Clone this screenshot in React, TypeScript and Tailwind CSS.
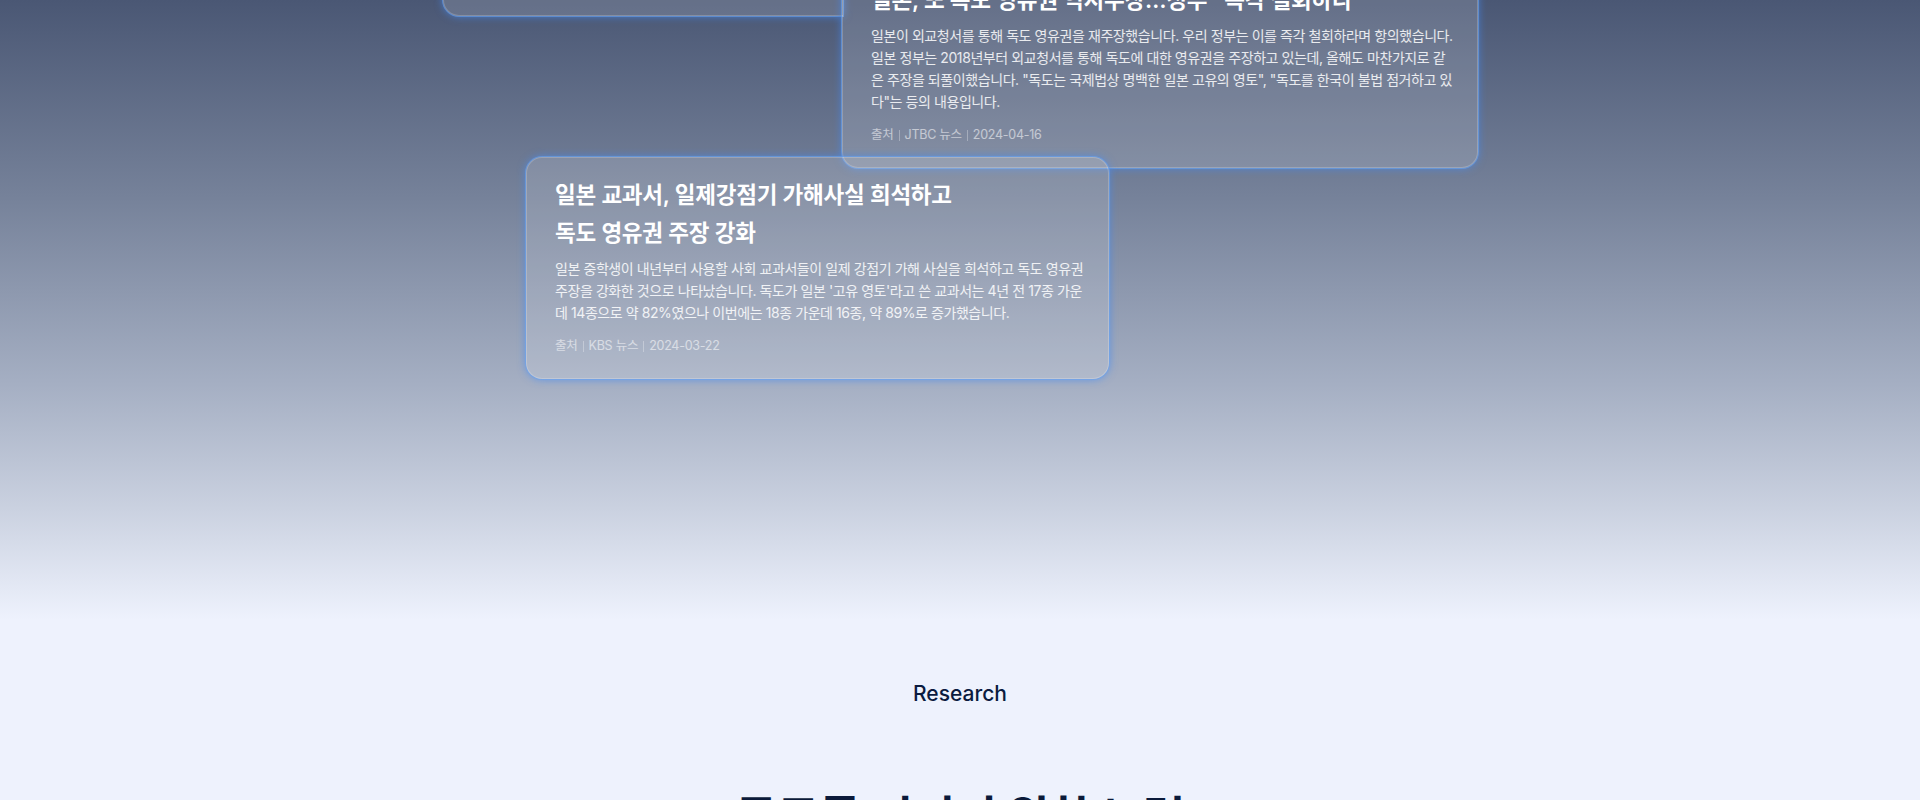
import type { ReactNode } from 'react';

type Article = {
  title: string[];
  body: string[];
  source: string;
  date: string;
};

const ARTICLES: Record<'jtbc' | 'kbs', Article> = {
  jtbc: {
    title: ['일본, 또 독도 영유권 억지주장…정부 "즉각 철회하라"'],
    body: [
      '일본이 외교청서를 통해 독도 영유권을 재주장했습니다. 우리 정부는 이를 즉각 철회하라며 항의했습니다.',
      '일본 정부는 2018년부터 외교청서를 통해 독도에 대한 영유권을 주장하고 있는데, 올해도 마찬가지로 같',
      '은 주장을 되풀이했습니다. "독도는 국제법상 명백한 일본 고유의 영토", "독도를 한국이 불법 점거하고 있',
      '다"는 등의 내용입니다.',
    ],
    source: 'JTBC 뉴스',
    date: '2024-04-16',
  },
  kbs: {
    title: ['일본 교과서, 일제강점기 가해사실 희석하고', '독도 영유권 주장 강화'],
    body: [
      '일본 중학생이 내년부터 사용할 사회 교과서들이 일제 강점기 가해 사실을 희석하고 독도 영유권',
      "주장을 강화한 것으로 나타났습니다. 독도가 일본 '고유 영토'라고 쓴 교과서는 4년 전 17종 가운",
      '데 14종으로 약 82%였으나 이번에는 18종 가운데 16종, 약 89%로 증가했습니다.',
    ],
    source: 'KBS 뉴스',
    date: '2024-03-22',
  },
};

function Glass({ className, children }: { className: string; children?: ReactNode }) {
  return (
    <article
      className={`absolute border border-white/20 bg-white/15 shadow-[0_0_0_1px_rgba(110,165,240,0.55),0_0_9px_rgba(70,140,245,0.8)] ${className}`}
    >
      {children}
    </article>
  );
}

function NewsCard({ article, className }: { article: Article; className: string }) {
  return (
    <Glass className={`rounded-2xl px-7 pt-[18px] pb-[22px] ${className}`}>
      <h3 className="text-[22.5px] leading-[38px] font-semibold tracking-[-0.01em] text-white whitespace-nowrap">
        {article.title.map((line) => (
          <span key={line} className="block">
            {line}
          </span>
        ))}
      </h3>
      <p className="mt-1.5 text-[14px] leading-[22px] tracking-[-0.03em] text-white/85 whitespace-nowrap">
        {article.body.map((line) => (
          <span key={line} className="block">
            {line}
          </span>
        ))}
      </p>
      <div className="mt-3 flex items-center text-[12.5px] leading-5 tracking-[-0.02em] text-white/55">
        <span>출처</span>
        <span className="mx-[5px] h-[11px] w-px bg-white/30" />
        <span>{article.source}</span>
        <span className="mx-[5px] h-[11px] w-px bg-white/30" />
        <span>{article.date}</span>
      </div>
    </Glass>
  );
}

export default function App() {
  return (
    <div className="min-h-screen bg-[#eef2fd] font-['Inter','Noto_Sans_CJK_KR',sans-serif]">
      {/* news wall, scattered glass cards */}
      <section className="relative h-[620px] overflow-hidden bg-[linear-gradient(180deg,#4a5774_0%,#76829a_32%,#a5afc3_62%,#cad1e0_82%,#eef2fd_100%)]">
        <Glass className="left-[443px] top-[-184px] h-[200px] w-[400px] rounded-l-2xl border-r-0" />
        <NewsCard article={ARTICLES.jtbc} className="left-[842px] top-[-38px] w-[636px]" />
        <NewsCard article={ARTICLES.kbs} className="left-[526px] top-[157px] w-[583px]" />
      </section>

      <section className="flex h-[600px] flex-col items-center pt-[59px]">
        <p className="text-[21px] leading-[30px] font-medium text-[#0b1b3f]">Research</p>
        <h2 className="mt-[80px] text-[46px] leading-[57px] font-bold tracking-[-0.01em] text-[#0b1a3a]">
          독도를 지키기 위한 노력
        </h2>
      </section>
    </div>
  );
}
